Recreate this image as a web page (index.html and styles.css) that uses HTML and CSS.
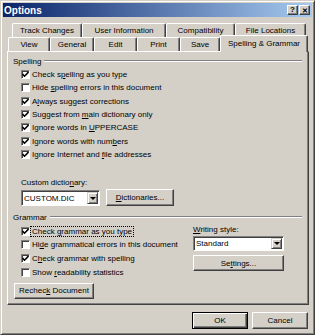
FILE: index.html
```html
<!DOCTYPE html>
<html lang="en">
<head>
    <meta charset="UTF-8">
    <title>Options</title>
    <link rel="stylesheet" href="styles.css">
</head>
<body>
    <div class="window">
        <div class="titlebar">
            <span class="title">Options</span>
            <div class="caption-buttons">
                <span class="caption-btn">?</span>
                <span class="caption-btn close">&#x2715;</span>
            </div>
        </div>

        <div class="tabs">
            <div class="tab-row back">
                <div class="tab" style="width:70px">Track Changes</div>
                <div class="tab" style="width:84px">User Information</div>
                <div class="tab" style="width:69px">Compatibility</div>
                <div class="tab" style="width:71px">File Locations</div>
            </div>
            <div class="tab-row front">
                <div class="tab" style="width:42px">View</div>
                <div class="tab" style="width:44px">General</div>
                <div class="tab" style="width:43px">Edit</div>
                <div class="tab" style="width:43px">Print</div>
                <div class="tab" style="width:40px">Save</div>
                <div class="tab active">Spelling &amp; Grammar</div>
            </div>
        </div>

        <div class="panel">
            <div class="group-head"><span>Spelling</span></div>
            <div class="checks spelling">
                <div class="check"><span class="box"><svg viewBox="0 0 7 7"><polyline points="0.5,3 2.5,5.2 6.5,1"/></svg></span><span>Check s<u>p</u>elling as you type</span></div>
                <div class="check"><span class="box"></span><span>Hide <u>s</u>pelling errors in this document</span></div>
                <div class="check"><span class="box"><svg viewBox="0 0 7 7"><polyline points="0.5,3 2.5,5.2 6.5,1"/></svg></span><span>A<u>l</u>ways suggest corrections</span></div>
                <div class="check"><span class="box"><svg viewBox="0 0 7 7"><polyline points="0.5,3 2.5,5.2 6.5,1"/></svg></span><span>Suggest from <u>m</u>ain dictionary only</span></div>
                <div class="check"><span class="box"><svg viewBox="0 0 7 7"><polyline points="0.5,3 2.5,5.2 6.5,1"/></svg></span><span>Ignore words in <u>U</u>PPERCASE</span></div>
                <div class="check"><span class="box"><svg viewBox="0 0 7 7"><polyline points="0.5,3 2.5,5.2 6.5,1"/></svg></span><span>Ignore words with num<u>b</u>ers</span></div>
                <div class="check"><span class="box"><svg viewBox="0 0 7 7"><polyline points="0.5,3 2.5,5.2 6.5,1"/></svg></span><span>Ignore Internet and <u>f</u>ile addresses</span></div>
            </div>

            <div class="field-label dict-label">Custom dictio<u>n</u>ary:</div>
            <div class="dict-row">
                <div class="combo dict-combo">
                    <span class="combo-text">CUSTOM.DIC</span>
                    <span class="combo-arrow"></span>
                </div>
                <div class="btn dict-btn"><span><u>D</u>ictionaries...</span></div>
            </div>

            <div class="group-head grammar-head"><span>Grammar</span></div>
            <div class="grammar">
                <div class="checks grammar-checks">
                    <div class="check"><span class="box"><svg viewBox="0 0 7 7"><polyline points="0.5,3 2.5,5.2 6.5,1"/></svg></span><span class="focus">Check <u>g</u>rammar as you type</span></div>
                    <div class="check"><span class="box"></span><span>Hi<u>d</u>e grammatical errors in this document</span></div>
                    <div class="check"><span class="box"><svg viewBox="0 0 7 7"><polyline points="0.5,3 2.5,5.2 6.5,1"/></svg></span><span>C<u>h</u>eck grammar with spelling</span></div>
                    <div class="check"><span class="box"></span><span>Show <u>r</u>eadability statistics</span></div>
                </div>
                <div class="style-col">
                    <div class="field-label"><u>W</u>riting style:</div>
                    <div class="combo style-combo">
                        <span class="combo-text">Standard</span>
                        <span class="combo-arrow"></span>
                    </div>
                    <div class="btn settings-btn"><span>Se<u>t</u>tings...</span></div>
                </div>
            </div>

            <div class="btn recheck-btn"><span>Rechec<u>k</u> Document</span></div>
        </div>

        <div class="footer">
            <div class="btn default">OK</div>
            <div class="btn">Cancel</div>
        </div>
    </div>
</body>
</html>
```

FILE: styles.css
```css
body {
    margin: 0;
    background-color: #d4d0c8;
    font-family: "Liberation Sans", Arial, sans-serif;
    font-size: 8px;
    color: #000;
}
u {
    text-decoration: underline;
    text-underline-offset: 1px;
}
.window {
    width: 315px;
    height: 335px;
    box-sizing: border-box;
    padding: 2px;
    background: #d4d0c8;
    border: 1px solid;
    border-color: #d4d0c8 #404040 #404040 #d4d0c8;
    box-shadow: inset 1px 1px #fff, inset -1px -1px #808080;
}

/* title bar */
.titlebar {
    height: 14px;
    display: flex;
    align-items: center;
    justify-content: space-between;
    padding: 0 2px 0 1px;
    background: linear-gradient(to right, #0a246a, #a6caf0);
}
.title {
    color: #fff;
    font-weight: bold;
    font-size: 10px;
}
.caption-buttons {
    display: flex;
    gap: 1px;
}
.caption-btn {
    width: 11px;
    height: 10px;
    box-sizing: border-box;
    display: flex;
    align-items: center;
    justify-content: center;
    background: #d4d0c8;
    border: 1px solid;
    border-color: #fff #404040 #404040 #fff;
    box-shadow: inset -1px -1px #808080;
    font-size: 8px;
    font-weight: bold;
    line-height: 1;
}
.caption-btn.close {
    font-size: 7px;
}

/* tabs */
.tabs {
    margin-top: 6px;
}
.tab-row {
    display: flex;
    height: 14px;
}
.tab-row.back {
    padding-left: 9px;
}
.tab-row.front {
    padding-left: 5px;
}
.tab {
    box-sizing: border-box;
    height: 14px;
    display: flex;
    align-items: center;
    justify-content: center;
    border-top: 1px solid #fff;
    border-left: 1px solid #fff;
    border-right: 1px solid #404040;
    box-shadow: inset -1px 0 #808080;
    border-radius: 2px 2px 0 0;
    white-space: nowrap;
}
.tab.active {
    width: 88px;
    height: 17px;
    margin-top: -2px;
    margin-bottom: -1px;
    position: relative;
    z-index: 1;
    background: #d4d0c8;
    padding-bottom: 2px;
}

/* panel */
.panel {
    width: 302px;
    height: 254px;
    margin-left: 4px;
    box-sizing: border-box;
    padding: 4px 6px 0 5px;
    border: 1px solid;
    border-color: #fff #404040 #404040 #fff;
    box-shadow: inset -1px -1px #808080;
}
.group-head {
    display: flex;
    align-items: center;
    height: 10px;
    gap: 3px;
}
.group-head::after {
    content: "";
    flex: 1;
    border-top: 1px solid #808080;
    border-bottom: 1px solid #fff;
}
.checks {
    padding-left: 8px;
    margin-top: 2px;
}
.check {
    display: flex;
    align-items: center;
    height: 13.33px;
    white-space: nowrap;
}
.grammar-checks .check {
    height: 13.67px;
}
.box {
    width: 9px;
    height: 9px;
    box-sizing: border-box;
    margin-right: 2px;
    background: #fff;
    border: 1px solid;
    border-color: #808080 #fff #fff #808080;
    box-shadow: inset 1px 1px #404040;
    display: flex;
    align-items: center;
    justify-content: center;
    flex-shrink: 0;
}
.box svg {
    width: 7px;
    height: 7px;
    fill: none;
    stroke: #000;
    stroke-width: 1.6;
}
.focus {
    outline: 1px dotted #000;
    padding: 0 1px;
    margin-left: -1px;
}
.field-label {
    height: 10px;
    line-height: 10px;
    white-space: nowrap;
}
.dict-label {
    margin-top: 17px;
    padding-left: 8px;
}
.dict-row {
    display: flex;
    align-items: flex-start;
    margin-top: 2px;
    padding-left: 8px;
}

/* combo boxes */
.combo {
    box-sizing: border-box;
    display: flex;
    align-items: center;
    background: #fff;
    border: 1px solid;
    border-color: #808080 #fff #fff #808080;
    box-shadow: inset 1px 1px #404040;
    padding: 1px 1px 1px 2px;
}
.combo-text {
    flex: 1;
}
.combo-arrow {
    width: 11px;
    height: 100%;
    box-sizing: border-box;
    background: #d4d0c8;
    border: 1px solid;
    border-color: #d4d0c8 #404040 #404040 #d4d0c8;
    box-shadow: inset 1px 1px #fff, inset -1px -1px #808080;
    display: flex;
    align-items: center;
    justify-content: center;
}
.combo-arrow::after {
    content: "";
    border-left: 3px solid transparent;
    border-right: 3px solid transparent;
    border-top: 3px solid #000;
}
.dict-combo {
    width: 79px;
    height: 16px;
}
.style-combo {
    width: 91px;
    height: 15px;
    margin-top: 1px;
}

/* buttons */
.btn {
    box-sizing: border-box;
    display: flex;
    align-items: center;
    justify-content: center;
    background: #d4d0c8;
    border: 1px solid;
    border-color: #fff #404040 #404040 #fff;
    box-shadow: inset -1px -1px #808080;
    white-space: nowrap;
}
.dict-btn {
    width: 68px;
    height: 17px;
    margin-left: 6px;
    margin-top: -1px;
}
.grammar-head {
    margin-top: 6px;
}
.grammar {
    display: flex;
}
.grammar-checks {
    width: 172px;
}
.style-col {
    padding-top: 3px;
}
.settings-btn {
    width: 91px;
    height: 16px;
    margin-top: 4px;
}
.recheck-btn {
    width: 80px;
    height: 16px;
    margin-top: 4px;
    margin-left: 1px;
}

/* footer */
.footer {
    display: flex;
    justify-content: flex-end;
    gap: 4px;
    margin-top: 7px;
    padding-right: 4px;
}
.footer .btn {
    width: 56px;
    height: 17px;
}
.footer .btn.default {
    border: 1px solid #000;
    box-shadow: inset 1px 1px #fff, inset -1px -1px #404040, inset -2px -2px #808080;
}
```
